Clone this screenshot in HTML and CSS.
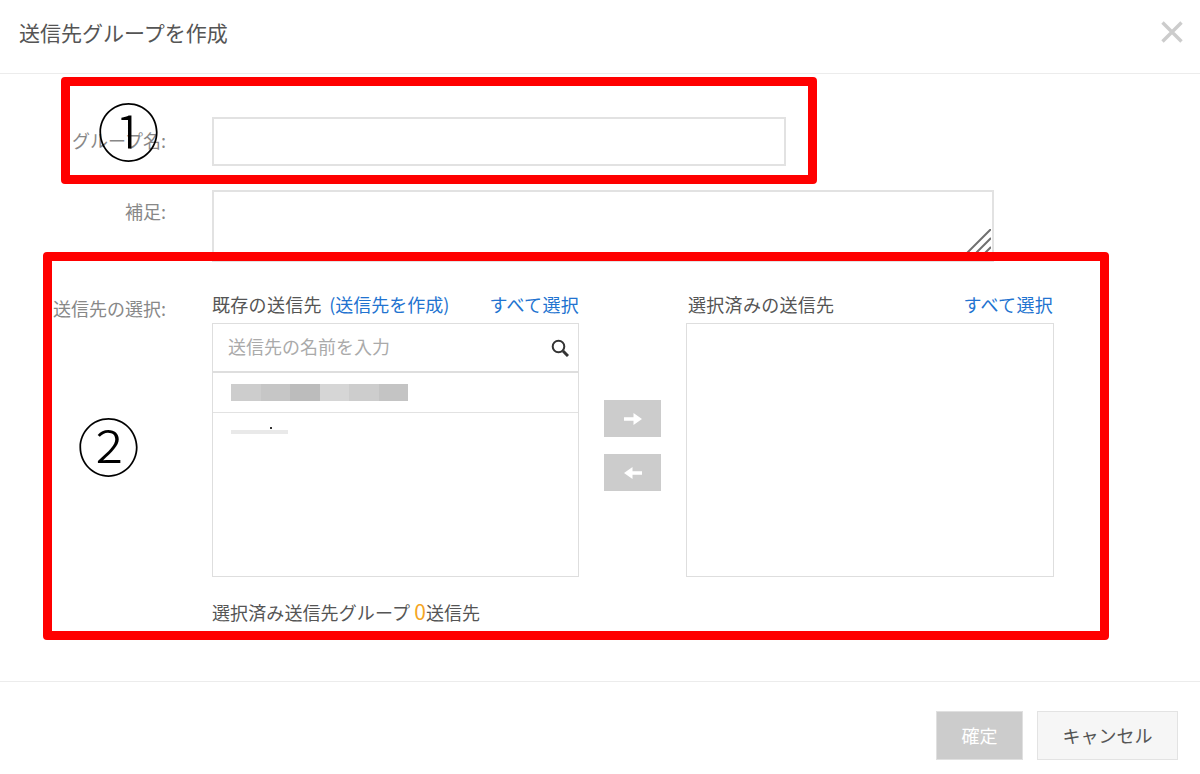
FILE: index.html
```html
<!DOCTYPE html>
<html lang="ja">
<head>
<meta charset="utf-8">
<title>送信先グループを作成</title>
<link rel="stylesheet" href="styles.css">
</head>
<body>
<div class="dialog">
  <header class="head">
    <h1 class="title">送信先グループを作成</h1>
    <svg class="close" viewBox="0 0 22 22" width="22" height="22"><path d="M1.5 1.5 20.5 20.5M20.5 1.5 1.5 20.5"/></svg>
  </header>
  <main class="form">
    <div class="row row-name">
      <label class="label">グループ名:</label>
      <div class="field field-name"></div>
    </div>
    <div class="row row-note">
      <label class="label">補足:</label>
      <div class="field field-note">
        <svg class="grip" viewBox="0 0 30 30" width="30" height="30"><path d="M0 30 30 0M9 30 30 9M18 30 30 18"/></svg>
      </div>
    </div>
    <div class="row row-pick">
      <label class="label label-pick">送信先の選択:</label>
      <div class="picker">
        <div class="pane">
          <div class="pane-head">
            <span>既存の送信先 <a class="link link-create">(送信先を作成)</a></span>
            <a class="link">すべて選択</a>
          </div>
          <div class="box">
            <div class="search">
              <span class="placeholder">送信先の名前を入力</span>
              <svg class="search-icon" viewBox="0 0 18 18" width="18" height="18"><circle cx="7.5" cy="7.5" r="5.8"/><path class="handle" d="M12 12 17 17"/></svg>
            </div>
            <div class="item">
              <div class="mosaic"><i class="m1"></i><i class="m2"></i><i class="m3"></i><i class="m4"></i><i class="m5"></i><i class="m6"></i></div>
            </div>
            <div class="item item-plain"><div class="streak"></div></div>
          </div>
        </div>
        <div class="moves">
          <button class="move"><svg viewBox="0 0 18 12" width="18" height="12"><path d="M0 4.3H9.5V0L18 6 9.5 12V7.7H0Z"/></svg></button>
          <button class="move"><svg viewBox="0 0 18 12" width="18" height="12"><path d="M18 4.3H8.5V0L0 6 8.5 12V7.7H18Z"/></svg></button>
        </div>
        <div class="pane pane-right">
          <div class="pane-head">
            <span>選択済みの送信先</span>
            <a class="link">すべて選択</a>
          </div>
          <div class="box"></div>
        </div>
      </div>
    </div>
    <p class="count">選択済み送信先グループ <b class="zero">0</b>送信先</p>
  </main>
  <footer class="foot">
    <button class="btn btn-ok">確定</button>
    <button class="btn btn-cancel">キャンセル</button>
  </footer>

  <div class="mark mark-1"></div>
  <div class="mark mark-2"></div>
  <span class="num num-1">①</span>
  <span class="num num-2">②</span>
</div>
</body>
</html>
```
FILE: styles.css
```css
* { box-sizing: border-box; }
html, body { margin: 0; padding: 0; background: #fff; }
body {
  font-family: "Noto Sans CJK JP", "Liberation Sans", sans-serif;
  color: #555;
  font-size: 18px;
}
.dialog { position: relative; width: 1200px; height: 774px; overflow: hidden; }

.head {
  height: 74px;
  border-bottom: 1px solid #ececec;
  display: flex;
  align-items: center;
  justify-content: space-between;
  padding: 0 17px 9px 19px;
}
.title { margin: 0; font-size: 21px; font-weight: 400; line-height: 30px; color: #555; }
.close { fill: none; stroke: #ccc; stroke-width: 3.4; }

.form { height: 608px; border-bottom: 1px solid #ececec; padding-top: 43px; }
.row { display: flex; gap: 46px; }
.label { width: 166px; flex: none; text-align: right; color: #888; font-size: 18px; line-height: 24px; white-space: nowrap; }
.field { border: 2px solid #e2e2e2; background: #fff; }
.row-name { height: 49px; }
.row-name .label { padding-top: 11px; }
.field-name { width: 574px; height: 49px; }
.row-note { margin-top: 24px; height: 72px; }
.row-note .label { padding-top: 9px; }
.field-note { width: 782px; height: 72px; position: relative; }
.grip { position: absolute; right: 1px; bottom: 1px; fill: none; stroke: #707070; stroke-width: 2; }

.row-pick { margin-top: 33px; }
.label-pick { padding-top: 1px; }
.picker { display: flex; }
.pane { width: 367px; }
.pane-right { width: 368px; }
.pane-head {
  height: 28px;
  display: flex;
  justify-content: space-between;
  align-items: flex-start;
  line-height: 19px;
  font-size: 18px;
  letter-spacing: 0.3px;
  color: #555;
}
.pane-right .pane-head { padding-left: 2px; padding-right: 1px; }
.link { color: #2273d0; }
.link-create { margin-left: 3px; letter-spacing: 0; }
.box { height: 254px; border: 1px solid #dedede; background: #fff; }
.search {
  height: 49px;
  border-bottom: 2px solid #dedede;
  display: flex;
  align-items: center;
  justify-content: space-between;
  padding: 0 9px 3px 15px;
}
.placeholder { color: #aaa; font-size: 18px; line-height: 24px; }
.search-icon { margin-top: 3px; fill: none; stroke: #333; stroke-width: 2; }
.search-icon .handle { stroke-width: 3; }
.item { height: 40px; border-bottom: 1px solid #e2e2e2; padding: 11px 0 0 18px; }
.item-plain { border-bottom: 0; padding-top: 14px; }
.mosaic { display: flex; height: 17px; }
.mosaic i { display: block; width: 29.5px; }
.m1 { background: #cdcdcd; }
.m2 { background: #c6c6c6; }
.m3 { background: #bcbcbc; }
.m4 { background: #d6d6d6; }
.m5 { background: #cdcdcd; }
.m6 { background: #c4c4c4; }
.streak {
  width: 57px;
  height: 7px;
  background:
    linear-gradient(#333, #333) 39px 0 / 2px 2px no-repeat,
    linear-gradient(#e9e9e9, #e9e9e9) 0 3px / 57px 4px no-repeat;
}

.moves { width: 107px; display: flex; flex-direction: column; align-items: center; gap: 17px; padding-top: 105px; }
.move {
  width: 57px;
  height: 37px;
  padding: 0;
  border: 0;
  background: #ccc;
  display: flex;
  align-items: center;
  justify-content: center;
}
.move svg { fill: #fff; stroke: none; }

.count { margin: 24px 0 0 212px; font-size: 18px; line-height: 20px; letter-spacing: 0.1px; color: #555; }
.zero { color: #f5a623; font-weight: 400; font-size: 21px; line-height: 20px; }

.foot { display: flex; justify-content: flex-end; gap: 14px; padding: 29px 22px 0 0; }
.btn { height: 49px; font-family: inherit; font-size: 18px; padding: 0 0 2px; }
.btn-ok { width: 87px; background: #ccc; color: #fff; border: 1px solid #e0e0e0; }
.btn-cancel { width: 141px; background: #f6f6f6; color: #555; border: 1px solid #e3e3e3; }

.mark { position: absolute; border: 9px solid #f00; border-radius: 4px; }
.mark-1 { left: 61px; top: 77px; width: 756px; height: 107px; }
.mark-2 { left: 43px; top: 252px; width: 1066px; height: 388px; }
.num { position: absolute; color: #000; font-size: 63px; line-height: 63px; font-weight: 300; }
.num-1 { left: 97px; top: 97px; }
.num-2 { left: 77px; top: 412px; }
```
